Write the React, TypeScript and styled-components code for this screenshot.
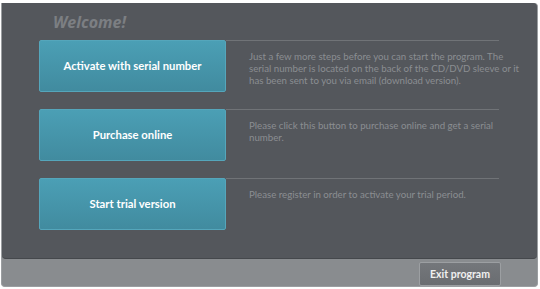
import styled, { createGlobalStyle } from "styled-components";

const Global = createGlobalStyle`
  html, body {
    margin: 0;
    background: #ffffff;
  }
  body {
    font-family: "Open Sans", "DejaVu Sans", sans-serif;
  }
`;

const Window = styled.div`
  margin: 3px 0 0 1px;
  width: 537px;
  height: 284px;
  box-sizing: border-box;
  background: #898c8f;
  border: 1px solid #9b9ea1;
  border-top: none;
  border-radius: 0 4px 4px 4px;
  display: flex;
  flex-direction: column;
`;

const Panel = styled.div`
  height: 256px;
  background: #54575c;
  border-radius: 0 4px 4px 4px;
  border-bottom: 1px solid #45484c;
  box-sizing: border-box;
  padding: 7px 38px 0 37px;
  display: flex;
  flex-direction: column;
`;

const Title = styled.h1`
  margin: 0 0 6px 14px;
  font-size: 16px;
  line-height: 24px;
  font-weight: 700;
  font-style: italic;
  color: #7c7f83;
`;

const Rows = styled.div`
  display: flex;
  flex-direction: column;
  gap: 16px;
`;

const Row = styled.div`
  display: flex;
  height: 53px;
`;

const Action = styled.button`
  width: 187px;
  height: 52px;
  flex: none;
  border: 1px solid #55a6bb;
  border-radius: 2px;
  background: linear-gradient(#4b9fb5, #418b9f);
  color: #ffffff;
  font-family: Lato, "Open Sans", sans-serif;
  font-weight: 700;
  font-size: 11.3px;
  padding: 0 0 2px;
  cursor: pointer;
`;

const Info = styled.div`
  flex: 1;
  border-top: 1px solid #707377;
  padding: 9px 0 0 23px;
`;

const Text = styled.p`
  margin: 0 -26px 0 0;
  font-family: Lato, "Open Sans", sans-serif;
  font-size: 9.7px;
  line-height: 12px;
  color: #8b8e92;
`;

const Footer = styled.div`
  flex: 1;
  display: flex;
  justify-content: flex-end;
  align-items: flex-start;
  padding: 3px 36px 0 0;
`;

const ExitButton = styled.button`
  width: 82px;
  height: 24px;
  border: 1px solid #9c9fa2;
  border-radius: 2px;
  background: linear-gradient(#74777b, #6a6d71);
  color: #f0f0f0;
  font-family: Lato, "Open Sans", sans-serif;
  font-weight: 700;
  font-size: 10.5px;
  cursor: pointer;
`;

const options = [
  {
    label: "Activate with serial number",
    text: "Just a few more steps before you can start the program. The serial number is located on the back of the CD/DVD sleeve or it has been sent to you via email (download version).",
  },
  {
    label: "Purchase online",
    text: "Please click this button to purchase online and get a serial number.",
  },
  {
    label: "Start trial version",
    text: "Please register in order to activate your trial period.",
  },
];

export default function App() {
  return (
    <>
      <Global />
      <Window>
        <Panel>
          <Title>Welcome!</Title>
          <Rows>
            {options.map((o) => (
              <Row key={o.label}>
                <Action>{o.label}</Action>
                <Info>
                  <Text>{o.text}</Text>
                </Info>
              </Row>
            ))}
          </Rows>
        </Panel>
        <Footer>
          <ExitButton>Exit program</ExitButton>
        </Footer>
      </Window>
    </>
  );
}
